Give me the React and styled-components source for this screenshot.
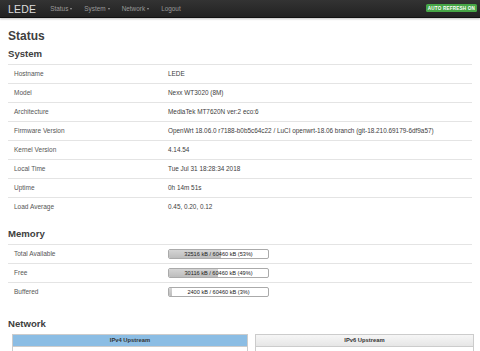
import React from 'react';
import styled, { createGlobalStyle } from 'styled-components';

const GlobalStyle = createGlobalStyle`
  html, body {
    margin: 0;
    padding: 0;
    background: #fff;
    font-family: "Liberation Sans", Arial, sans-serif;
    color: #404040;
  }
`;

const systemRows = [
  ['Hostname', 'LEDE'],
  ['Model', 'Nexx WT3020 (8M)'],
  ['Architecture', 'MediaTek MT7620N ver:2 eco:6'],
  ['Firmware Version', 'OpenWrt 18.06.0 r7188-b0b5c64c22 / LuCI openwrt-18.06 branch (git-18.210.69179-6df9a57)'],
  ['Kernel Version', '4.14.54'],
  ['Local Time', 'Tue Jul 31 18:28:34 2018'],
  ['Uptime', '0h 14m 51s'],
  ['Load Average', '0.45, 0.20, 0.12'],
];

const memoryRows = [
  ['Total Available', 32516, 53],
  ['Free', 30116, 49],
  ['Buffered', 2400, 3],
];

const App = () => {
  return (
    <>
      <GlobalStyle />
      <Navbar>
        <Brand>LEDE</Brand>
        <NavItem>Status<Caret /></NavItem>
        <NavItem>System<Caret /></NavItem>
        <NavItem>Network<Caret /></NavItem>
        <NavItem>Logout</NavItem>
        <Badge>AUTO REFRESH ON</Badge>
      </Navbar>
      <Main>
        <Title>Status</Title>
        <Heading>System</Heading>
        <Table>
          <tbody>
            {systemRows.map(([label, value]) => (
              <tr key={label}>
                <LabelCell>{label}</LabelCell>
                <ValueCell>{value}</ValueCell>
              </tr>
            ))}
          </tbody>
        </Table>

        <Heading top={12}>Memory</Heading>
        <Table>
          <tbody>
            {memoryRows.map(([label, used, pct]) => (
              <tr key={label}>
                <LabelCell>{label}</LabelCell>
                <ValueCell>
                  <Bar>
                    <BarFill style={{ width: pct + '%' }} />
                    <BarText>{used} kB / 60460 kB ({pct}%)</BarText>
                  </Bar>
                </ValueCell>
              </tr>
            ))}
          </tbody>
        </Table>

        <Heading top={17}>Network</Heading>
        <Boxes>
          <Box share={236}>
            <BoxHead active>IPv4 Upstream</BoxHead>
          </Box>
          <Box share={219}>
            <BoxHead>IPv6 Upstream</BoxHead>
          </Box>
        </Boxes>
      </Main>
    </>
  );
};

const Navbar = styled.div`
  height: 18px;
  display: flex;
  align-items: center;
  padding: 0 3px 0 8px;
  box-sizing: border-box;
  background: linear-gradient(#333, #222);
  border-bottom: 1px solid #111;
  box-shadow: 0 1px 2px rgba(0, 0, 0, 0.25);
`;

const Brand = styled.div`
  font-size: 10.5px;
  color: #ddd;
  margin-right: 14px;
  letter-spacing: 0.2px;
`;

const NavItem = styled.div`
  font-size: 6.4px;
  color: #9a9a9a;
  margin-right: 12px;
  display: flex;
  align-items: center;
`;

const Caret = styled.span`
  display: inline-block;
  margin-left: 2px;
  border-left: 1.5px solid transparent;
  border-right: 1.5px solid transparent;
  border-top: 2px solid #9a9a9a;
`;

const Badge = styled.div`
  margin-left: auto;
  margin-top: -1px;
  background: #46a546;
  color: #fff;
  font-size: 4.6px;
  font-weight: bold;
  padding: 1.5px 2px;
  border-radius: 1.5px;
  letter-spacing: 0.2px;
`;

const Main = styled.div`
  padding: 0 8px;
`;

const Title = styled.h2`
  margin: 10px 0 4px;
  font-size: 12px;
  line-height: 16px;
  font-weight: bold;
  color: #404040;
`;

const Heading = styled.h3`
  margin: ${props => props.top || 0}px 0 3.5px;
  font-size: 9.6px;
  line-height: 12px;
  font-weight: bold;
  color: #404040;
`;

const Table = styled.table`
  width: 100%;
  border-collapse: collapse;
  table-layout: fixed;
  td {
    height: 19px;
    padding: 0 6px;
    border-top: 1px solid #e4e4e4;
    box-sizing: border-box;
    vertical-align: middle;
  }
`;

const LabelCell = styled.td`
  width: 154px;
  font-size: 6.5px;
  color: #555;
`;

const ValueCell = styled.td`
  font-size: 6.4px;
  color: #404040;
  white-space: nowrap;
`;

const Bar = styled.div`
  position: relative;
  width: 99px;
  height: 8px;
  border: 1px solid #aaa;
  border-radius: 2px;
  background: #fff;
  overflow: hidden;
`;

const BarFill = styled.div`
  height: 100%;
  background: linear-gradient(#d4d4d4, #bdbdbd);
`;

const BarText = styled.div`
  position: absolute;
  inset: 0;
  text-align: center;
  font-size: 5.6px;
  line-height: 8px;
  color: #222;
`;

const Boxes = styled.div`
  display: flex;
  gap: 7px;
  margin: 0 -2px 0 4px;
`;

const Box = styled.div`
  flex: ${props => props.share};
  border: 1px solid #ccc;
  border-bottom: none;
  height: 20px;
`;

const BoxHead = styled.div`
  height: 11px;
  line-height: 11px;
  text-align: center;
  font-size: 5.8px;
  font-weight: bold;
  color: #333;
  background: ${props => props.active ? '#8bbde4' : 'linear-gradient(#f6f6f6, #e6e6e6)'};
  border-bottom: 1px solid #ccc;
`;

export default App;
